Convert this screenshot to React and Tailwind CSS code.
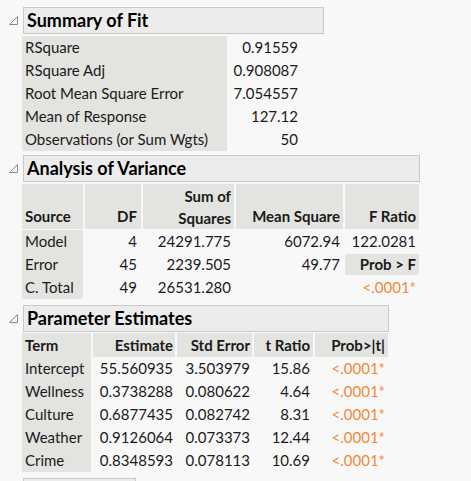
import React from "react";

const F = { fontFamily: "Lato, 'Noto Sans', sans-serif" };
const grey = "bg-[#e3e3df]";
const orange = "text-[#f0883a]";

function Header({ title, w }) {
  return (
    <div className="flex items-center">
      <div className="w-[23px] flex justify-center pl-[4px]">
        <svg width="9" height="9" viewBox="0 0 9 9"><path d="M8.5 0.5 L8.5 8.5 L0.5 8.5 Z" fill="none" stroke="#8a8a8a" strokeWidth="1" /></svg>
      </div>
      <div className={`h-[27px] bg-[#ececec] border border-[#c9c9c9] flex items-center pl-[3px] text-[18px] font-bold text-black`} style={{ width: w }}>
        {title}
      </div>
    </div>
  );
}

export default function App() {
  const sof = [["RSquare", "0.91559"], ["RSquare Adj", "0.908087"], ["Root Mean Square Error", "7.054557"], ["Mean of Response", "127.12"], ["Observations (or Sum Wgts)", "50"]];
  const anova = [["Model", "4", "24291.775", "6072.94", "122.0281"], ["Error", "45", "2239.505", "49.77", "PROB"], ["C. Total", "49", "26531.280", "", "P"]];
  const pe = [["Intercept", "55.560935", "3.503979", "15.86"], ["Wellness", "0.3738288", "0.080622", "4.64"], ["Culture", "0.6877435", "0.082742", "8.31"], ["Weather", "0.9126064", "0.073373", "12.44"], ["Crime", "0.8348593", "0.078113", "10.69"]];
  return (
    <div className="w-[471px] h-[481px] bg-[#f8f8f8] overflow-hidden pt-[7px] text-[15px] text-[#1a1a1a]" style={F}>
      <Header title="Summary of Fit" w="301px" />
      <div className="ml-[22px] mt-[2px]">
        {sof.map(([a, b]) => (
          <div key={a} className="flex h-[23px] items-center">
            <div className={`${grey} w-[205px] h-full flex items-center pl-[3px]`}>{a}</div>
            <div className="w-[71px] text-right">{b}</div>
          </div>
        ))}
      </div>
      <div className="mt-[4px]"><Header title="Analysis of Variance" w="397px" /></div>
      <div className="ml-[22px] mt-[2px]">
        <div className="flex h-[45px] font-bold gap-[2px]">
          <div className={`${grey} w-[61px] flex items-end pl-[3px] pb-[2px]`}>Source</div>
          <div className={`${grey} w-[56px] flex items-end justify-end pr-[4px] pb-[2px]`}>DF</div>
          <div className={`${grey} w-[91px] flex items-end justify-end text-right leading-[22px] pr-[3px]`}>Sum of<br />Squares</div>
          <div className={`${grey} w-[107px] flex items-end justify-end pr-[3px] pb-[2px]`}>Mean Square</div>
          <div className={`${grey} w-[74px] flex items-end justify-end pr-[3px] pb-[2px]`}>F Ratio</div>
        </div>
        <div className="mt-[1px]">
          {anova.map(([a, b, c, d, e]) => (
            <div key={a} className="flex h-[23px] items-center gap-[2px]">
              <div className={`${grey} w-[61px] h-full flex items-center pl-[3px]`}>{a}</div>
              <div className="w-[56px] text-right pr-[4px]">{b}</div>
              <div className="w-[91px] text-right pr-[3px]">{c}</div>
              <div className="w-[107px] text-right pr-[3px]">{d}</div>
              {e === "PROB" ? (
                <div className={`${grey} w-[74px] h-[21px] flex items-center justify-end pr-[3px] font-bold`}>Prob &gt; F</div>
              ) : e === "P" ? (
                <div className={`w-[74px] text-right pr-[3px] ${orange}`}>&lt;.0001*</div>
              ) : (
                <div className="w-[74px] text-right pr-[3px]">{e}</div>
              )}
            </div>
          ))}
        </div>
      </div>
      <div className="mt-[6px]"><Header title="Parameter Estimates" w="366px" /></div>
      <div className="ml-[22px] mt-[1px]">
        <div className="flex h-[24px] font-bold gap-[2px] items-stretch">
          <div className={`${grey} w-[69px] flex items-center pl-[3px]`}>Term</div>
          <div className={`${grey} w-[82px] flex items-center justify-end pr-[2px]`}>Estimate</div>
          <div className={`${grey} w-[75px] flex items-center justify-end pr-[2px]`}>Std Error</div>
          <div className={`${grey} w-[59px] flex items-center justify-end pr-[3px]`}>t Ratio</div>
          <div className={`${grey} w-[73px] flex items-center justify-end pr-[3px]`}>Prob&gt;|t|</div>
        </div>
        <div>
          {pe.map(([a, b, c, d]) => (
            <div key={a} className="flex h-[23px] items-center gap-[2px]">
              <div className={`${grey} w-[69px] h-full flex items-center pl-[3px]`}>{a}</div>
              <div className="w-[82px] text-right pr-[2px]">{b}</div>
              <div className="w-[75px] text-right pr-[2px]">{c}</div>
              <div className="w-[59px] text-right pr-[3px]">{d}</div>
              <div className={`w-[73px] text-right pr-[3px] ${orange}`}>&lt;.0001*</div>
            </div>
          ))}
        </div>
      </div>
      <div className="ml-[23px] mt-[6px] w-[113px] h-[20px] bg-[#ececec] border border-[#c9c9c9]" />
    </div>
  );
}
